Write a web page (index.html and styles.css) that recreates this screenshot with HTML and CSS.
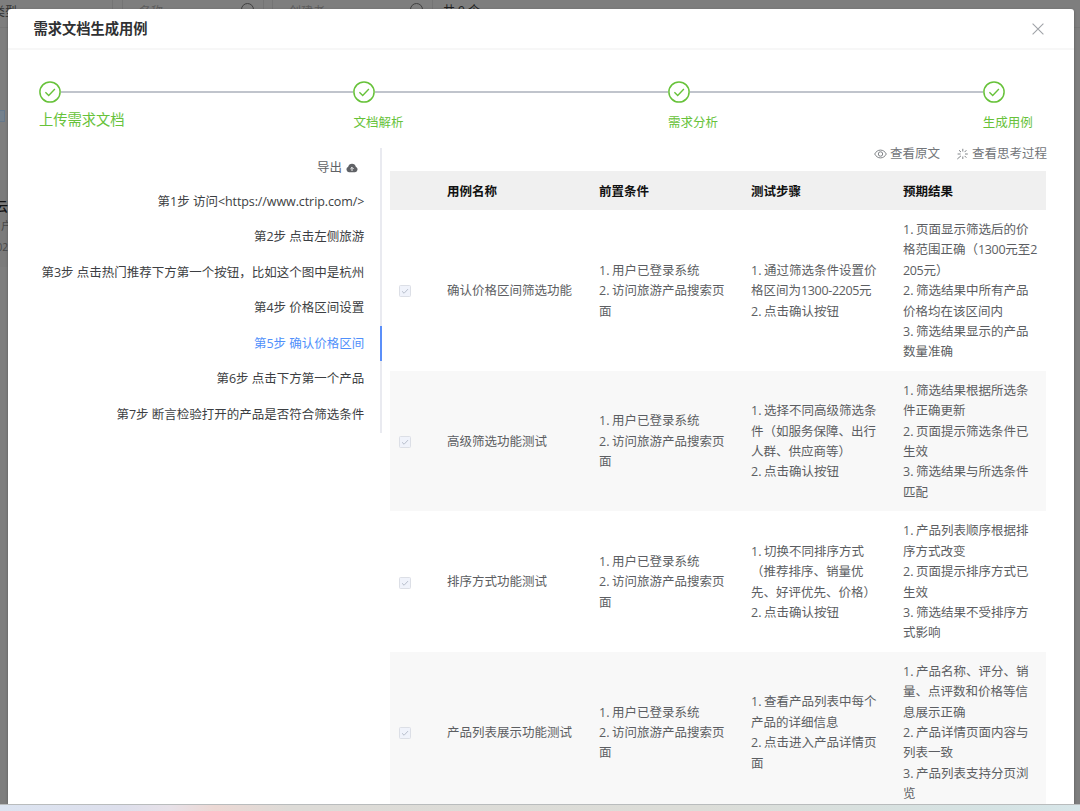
FILE: index.html
```html
<!DOCTYPE html>
<html lang="zh-CN">
<head>
<meta charset="utf-8">
<title>需求文档生成用例</title>
<link rel="stylesheet" href="styles.css">
</head>
<body>
<svg class="sprite" width="0" height="0">
  <symbol id="circle-check" viewBox="0 0 22 22"><circle cx="11" cy="11" r="10.1" fill="none" stroke="currentColor" stroke-width="1.5"/><path d="M6.4 11.2l3.3 3.2 6.2-6.3" fill="none" stroke="currentColor" stroke-width="1.4"/></symbol>
  <symbol id="tick" viewBox="0 0 12 12"><path d="M2.4 6.3l2.5 2.4 4.7-5" fill="none" stroke="currentColor" stroke-width="1.2"/></symbol>
</svg>
<div class="page" aria-hidden="true">
  <div class="filters">
    <span class="field field-type">类型</span>
    <span class="field field-name">名称<i class="lens"></i></span>
    <span class="field field-owner">创建者<i class="lens"></i></span>
    <span class="total">共 9 个</span>
  </div>
  <span class="tag"></span>
  <div class="card"><b>云</b><span>户</span><span class="date">02</span></div>
</div>
<main class="dialog">
  <header class="dialog-head">
    <h1>需求文档生成用例</h1>
    <svg class="close" viewBox="0 0 12 12"><path d="M.6.6l10.8 10.8M11.4.6L.6 11.4" stroke="currentColor" stroke-width="1.1"/></svg>
  </header>
  <ol class="steps">
    <li class="step first"><div class="track"><svg><use href="#circle-check"/></svg></div><p>上传需求文档</p></li>
    <li class="step"><div class="track"><svg><use href="#circle-check"/></svg></div><p>文档解析</p></li>
    <li class="step"><div class="track"><svg><use href="#circle-check"/></svg></div><p>需求分析</p></li>
    <li class="step last"><div class="track"><svg><use href="#circle-check"/></svg></div><p>生成用例</p></li>
  </ol>
  <div class="body">
    <nav class="tabs">
      <div class="export">导出
        <svg viewBox="0 0 12 10"><path d="M3 9.2A2.8 2.8 0 0 1 2.2 3.8 3.9 3.9 0 0 1 9.8 3.8 2.8 2.8 0 0 1 9 9.2z" fill="currentColor"/><path d="M6 8V4.6M4.4 5.9L6 4.3l1.6 1.6" fill="none" stroke="#fff" stroke-width=".9"/></svg>
      </div>
      <a>第1步 访问<span class="url">&lt;https://www.ctrip.com/&gt;</span></a>
      <a>第2步 点击左侧旅游</a>
      <a>第3步 点击热门推荐下方第一个按钮，比如这个图中是杭州</a>
      <a>第4步 价格区间设置</a>
      <a class="active">第5步 确认价格区间</a>
      <a>第6步 点击下方第一个产品</a>
      <a>第7步 断言检验打开的产品是否符合筛选条件</a>
    </nav>
    <section class="content">
      <div class="links">
        <span><svg viewBox="0 0 13 12"><path d="M.7 6C2 3.5 4 2.1 6.5 2.1S11 3.5 12.3 6C11 8.5 9 9.9 6.5 9.9S2 8.5.7 6z" fill="none" stroke="currentColor" stroke-width=".9"/><circle cx="6.5" cy="6" r="2.2" fill="none" stroke="currentColor" stroke-width=".9"/></svg>查看原文</span>
        <span><svg viewBox="0 0 13 12"><path d="M6.8 .8v2.7M6.8 8.5v2.5M9 6h2.8M10.4 2.2L8.6 4.1M8.6 7.9l1.8 1.8M3 2.2l2 1.9M1.6 6h3M5 7.8L1.3 11" fill="none" stroke="currentColor" stroke-width=".9"/></svg>查看思考过程</span>
      </div>
      <table>
        <thead><tr><th class="pick"></th><th>用例名称</th><th>前置条件</th><th>测试步骤</th><th>预期结果</th></tr></thead>
        <tbody>
          <tr><td><span class="box"><svg><use href="#tick"/></svg></span></td><td>确认价格区间筛选功能</td>
            <td>1. 用户已登录系统<br>2. 访问旅游产品搜索页<br>面</td>
            <td>1. 通过筛选条件设置价<br>格区间为<i class="n">1300-2205</i>元<br>2. 点击确认按钮</td>
            <td>1. 页面显示筛选后的价<br>格范围正确（<i class="n">1300</i>元至2<br><i class="n">205</i>元）<br>2. 筛选结果中所有产品<br>价格均在该区间内<br>3. 筛选结果显示的产品<br>数量准确</td></tr>
          <tr><td><span class="box"><svg><use href="#tick"/></svg></span></td><td>高级筛选功能测试</td>
            <td>1. 用户已登录系统<br>2. 访问旅游产品搜索页<br>面</td>
            <td>1. 选择不同高级筛选条<br>件（如服务保障、出行<br>人群、供应商等）<br>2. 点击确认按钮</td>
            <td>1. 筛选结果根据所选条<br>件正确更新<br>2. 页面提示筛选条件已<br>生效<br>3. 筛选结果与所选条件<br>匹配</td></tr>
          <tr><td><span class="box"><svg><use href="#tick"/></svg></span></td><td>排序方式功能测试</td>
            <td>1. 用户已登录系统<br>2. 访问旅游产品搜索页<br>面</td>
            <td>1. 切换不同排序方式<br>（推荐排序、销量优<br>先、好评优先、价格）<br>2. 点击确认按钮</td>
            <td>1. 产品列表顺序根据排<br>序方式改变<br>2. 页面提示排序方式已<br>生效<br>3. 筛选结果不受排序方<br>式影响</td></tr>
          <tr><td><span class="box"><svg><use href="#tick"/></svg></span></td><td>产品列表展示功能测试</td>
            <td>1. 用户已登录系统<br>2. 访问旅游产品搜索页<br>面</td>
            <td>1. 查看产品列表中每个<br>产品的详细信息<br>2. 点击进入产品详情页<br>面</td>
            <td>1. 产品名称、评分、销<br>量、点评数和价格等信<br>息展示正确<br>2. 产品详情页面内容与<br>列表一致<br>3. 产品列表支持分页浏<br>览</td></tr>
        </tbody>
      </table>
    </section>
  </div>
</main>
<footer class="taskbar"></footer>
</body>
</html>
```
FILE: styles.css
```css
* { box-sizing: border-box; }
body {
  margin: 0;
  width: 1080px;
  height: 811px;
  overflow: hidden;
  display: flex;
  flex-direction: column;
  background: #7e7e7e;
  color: #5c5e62;
  font: 12.5px/20.45px "Open Sans", "Noto Sans CJK SC", sans-serif;
}
h1, p, ol { margin: 0; padding: 0; }
.sprite { position: absolute; }

/* Dimmed page behind the dialog */
.page { position: absolute; inset: 0; overflow: hidden; }
.filters {
  display: flex;
  height: 28px;
  border-bottom: 1px solid #777;
  font-size: 12px;
  color: #5c5c5c;
}
.field { border-right: 1px solid #747474; height: 28px; display: flex; justify-content: space-between; padding: 2px 9px 0 16px; }
.field-type { padding-left: 0; margin-left: -7px; width: 120px; color: #333; }
.field-name { width: 142px; margin-left: 9px; border-left: 1px solid #747474; }
.field-owner { width: 161px; margin-left: 8px; border-left: 1px solid #747474; padding-right: 9px; }
.lens { width: 13px; height: 13px; border: 1px solid #404040; border-radius: 50%; margin-top: 1px; }
.total { padding: 1px 0 0 10px; color: #222; }
.tag { display: block; width: 5px; height: 12px; margin-top: 82px; background: #74818d; border: 1px solid #66788a; border-left: 0; }
.card { margin-top: 58px; height: 87px; width: 8px; overflow: hidden; background: #7b7b7b; display: flex; flex-direction: column; align-items: flex-end; padding-top: 16px; font-size: 11px; color: #484848; }
.card b { font-size: 13px; color: #111; font-weight: 500; }
.card span:not(.date) { margin-right: -4px; }
.card .date { font-size: 10px; }

/* Dialog */
.dialog {
  position: relative;
  flex: none;
  height: 795px;
  margin: 9px 6px 0 7.5px;
  background: #fff;
  border-radius: 3px 3px 0 0;
  overflow: hidden;
  box-shadow: 0 1px 3px rgba(0, 0, 0, .3);
}
.dialog-head {
  display: flex;
  justify-content: space-between;
  align-items: center;
  height: 41px;
  padding: 1px 30px 0 26px;
  border-bottom: 2px solid #f7f7f7;
}
h1 { font-size: 14.25px; line-height: 20px; color: #303133; font-weight: 700; }
.close { width: 12px; height: 12px; color: #a0a3a8; margin-top: -1px; }

.steps { display: flex; list-style: none; padding: 30.5px 0 0 31.4px; color: #67c23a; height: 91px; }
.step { width: 314.6px; flex: none; }
.track { display: flex; align-items: center; height: 22px; }
.track svg { width: 22px; height: 22px; flex: none; }
.track::after { content: ""; height: 2px; flex: 1; background: #c0c4cc; }
.last .track::after { display: none; }
.step p { line-height: 20px; margin-top: 10px; }
.step.first p { font-size: 14.3px; margin-top: 7.5px; }

.body { display: flex; }
.tabs {
  width: 374.5px;
  margin-top: 7px;
  height: 285px;
  border-right: 2px solid #e9eaf0;
  display: flex;
  flex-direction: column;
  color: #3c3e42;
}
.tabs a, .export {
  height: 35.5px;
  line-height: 36.6px;
  padding-right: 15.7px;
  margin-right: -2px;
  text-align: right;
  white-space: nowrap;
  flex: none;
  border-right: 2px solid transparent;
}
.tabs .export { color: #606266; padding-right: 21.8px; line-height: 40px; }
.export svg { width: 12px; height: 10px; margin-left: 1px; vertical-align: -1px; }
.url { font-weight: 500; letter-spacing: -.09px; }
.tabs a.active { color: #5090fb; border-right-color: #5b8ff9; }

.content { margin-left: 7.5px; width: 656.5px; }
.links { display: flex; justify-content: flex-end; gap: 16px; height: 30px; padding-bottom: 3.5px; line-height: 20px; color: #73767a; margin-right: -1px; }
.links span { display: flex; align-items: center; gap: 3px; }
.links svg { width: 13px; height: 12px; }

table { width: 656.5px; border-collapse: collapse; table-layout: fixed; }
th { height: 39px; padding: 3px 9px 0; text-align: left; background: #f0f0f0; color: #111; font-weight: 700; width: 152px; }
th.pick { width: 48.5px; }
td { padding: 9.7px 0 8.1px 9px; white-space: nowrap; vertical-align: middle; word-spacing: -.6px; }
tbody tr:nth-child(even) { background: #f8f8f8; }
.n { font-style: normal; letter-spacing: -.35px; }
.box { display: block; width: 12px; height: 12px; border: 1px solid #dcdfe6; border-radius: 1.5px; background: #f0f3fb; color: #b8bfcc; }
.box svg { display: block; width: 10px; height: 10px; }

.taskbar {
  position: relative;
  height: 7px;
  border-top: 1px solid #b9bcbd;
  background: linear-gradient(90deg, #dce4f1 0, #dddfec 120px, #e7e1e8 170px, #ecd8d4 215px, #dddbd7 290px, #dcddd8 700px, #d5e3e4 1000px, #d8e6e9);
}
```
